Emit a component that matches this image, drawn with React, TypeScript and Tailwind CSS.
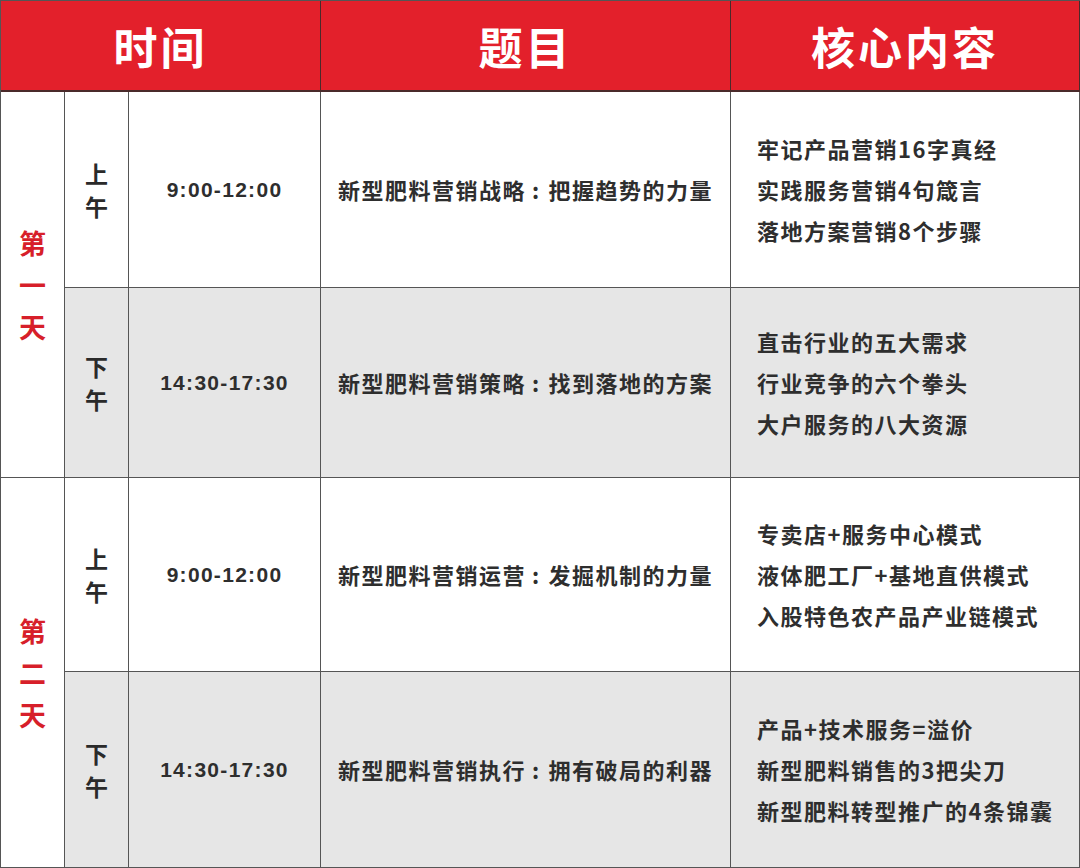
import React from "react";

type Session = {
  half: [string, string];
  time: string;
  topic: [string, string];
  items: string[];
  grey: boolean;
};

const sessions: Session[] = [
  {
    half: ["上", "午"],
    time: "9:00-12:00",
    topic: ["新型肥料营销战略", "把握趋势的力量"],
    items: ["牢记产品营销16字真经", "实践服务营销4句箴言", "落地方案营销8个步骤"],
    grey: false,
  },
  {
    half: ["下", "午"],
    time: "14:30-17:30",
    topic: ["新型肥料营销策略", "找到落地的方案"],
    items: ["直击行业的五大需求", "行业竞争的六个拳头", "大户服务的八大资源"],
    grey: true,
  },
  {
    half: ["上", "午"],
    time: "9:00-12:00",
    topic: ["新型肥料营销运营", "发掘机制的力量"],
    items: ["专卖店+服务中心模式", "液体肥工厂+基地直供模式", "入股特色农产品产业链模式"],
    grey: false,
  },
  {
    half: ["下", "午"],
    time: "14:30-17:30",
    topic: ["新型肥料营销执行", "拥有破局的利器"],
    items: ["产品+技术服务=溢价", "新型肥料销售的3把尖刀", "新型肥料转型推广的4条锦囊"],
    grey: true,
  },
];

function SessionCells({ s }: { s: Session }) {
  const bg = s.grey ? "bg-[#e6e6e6]" : "bg-white";
  return (
    <>
      <div
        className={`${bg} border-r border-b border-[#555] flex flex-col items-center justify-center font-['Noto_Sans_CJK_SC',sans-serif] text-[23px] font-bold text-[#2a2a2a] leading-[33px]`}
      >
        <span>{s.half[0]}</span>
        <span>{s.half[1]}</span>
      </div>
      <div
        className={`${bg} border-r border-b border-[#555] flex items-center justify-center font-['Liberation_Sans','Noto_Sans_CJK_SC',sans-serif] text-[21px] font-bold text-[#2e2e2e] tracking-[1.3px]`}
      >
        {s.time}
      </div>
      <div
        className={`${bg} border-r border-b border-[#555] flex items-center justify-center font-['Noto_Sans_CJK_SC',sans-serif] text-[22px] font-bold text-[#2e2e2e] tracking-[1.5px]`}
      >
        <span>{s.topic[0]}</span>
        <span className="pl-[6px] pr-[1px]">:</span>
        <span className="pl-[7px]">{s.topic[1]}</span>
      </div>
      <div
        className={`${bg} border-r border-b border-[#555] flex flex-col justify-center pl-[26px] font-['Noto_Sans_CJK_SC',sans-serif] text-[22px] font-bold text-[#2e2e2e] leading-[41px] tracking-[1.5px]`}
      >
        {s.items.map((t) => (
          <span key={t}>{t}</span>
        ))}
      </div>
    </>
  );
}

function DayCell({ chars, row }: { chars: string[]; row: string }) {
  return (
    <div
      className={`${row} col-start-1 bg-white border-r border-b border-[#555] flex flex-col items-center justify-center font-['Noto_Sans_CJK_SC',sans-serif] text-[27px] font-bold text-[#d71f2a] leading-[42px]`}
    >
      {chars.map((c, i) => (
        <span key={i}>{c}</span>
      ))}
    </div>
  );
}

const headCls =
  "bg-[#e3202b] border-r border-b-2 border-[#4a2a2a] flex items-center justify-center font-['Noto_Sans_CJK_SC',sans-serif] text-white text-[44px] font-bold tracking-[3px]";

export default function App() {
  return (
    <div className="w-[1080px] h-[868px] bg-white overflow-hidden">
      <div className="grid grid-cols-[64px_64px_192px_410px_349px] grid-rows-[91px_196px_190px_194px_196px] border-l border-t border-[#555] w-[1080px] h-[868px]">
        <div className={`col-span-3 ${headCls}`}>时间</div>
        <div className={headCls}>题目</div>
        <div className={headCls}>核心内容</div>

        <DayCell chars={["第", "一", "天"]} row="row-start-2 row-span-2" />
        <div className="col-start-2 col-span-4 row-start-2 grid grid-cols-subgrid">
          <SessionCells s={sessions[0]} />
        </div>
        <div className="col-start-2 col-span-4 row-start-3 grid grid-cols-subgrid">
          <SessionCells s={sessions[1]} />
        </div>

        <DayCell chars={["第", "二", "天"]} row="row-start-4 row-span-2" />
        <div className="col-start-2 col-span-4 row-start-4 grid grid-cols-subgrid">
          <SessionCells s={sessions[2]} />
        </div>
        <div className="col-start-2 col-span-4 row-start-5 grid grid-cols-subgrid">
          <SessionCells s={sessions[3]} />
        </div>
      </div>
    </div>
  );
}
